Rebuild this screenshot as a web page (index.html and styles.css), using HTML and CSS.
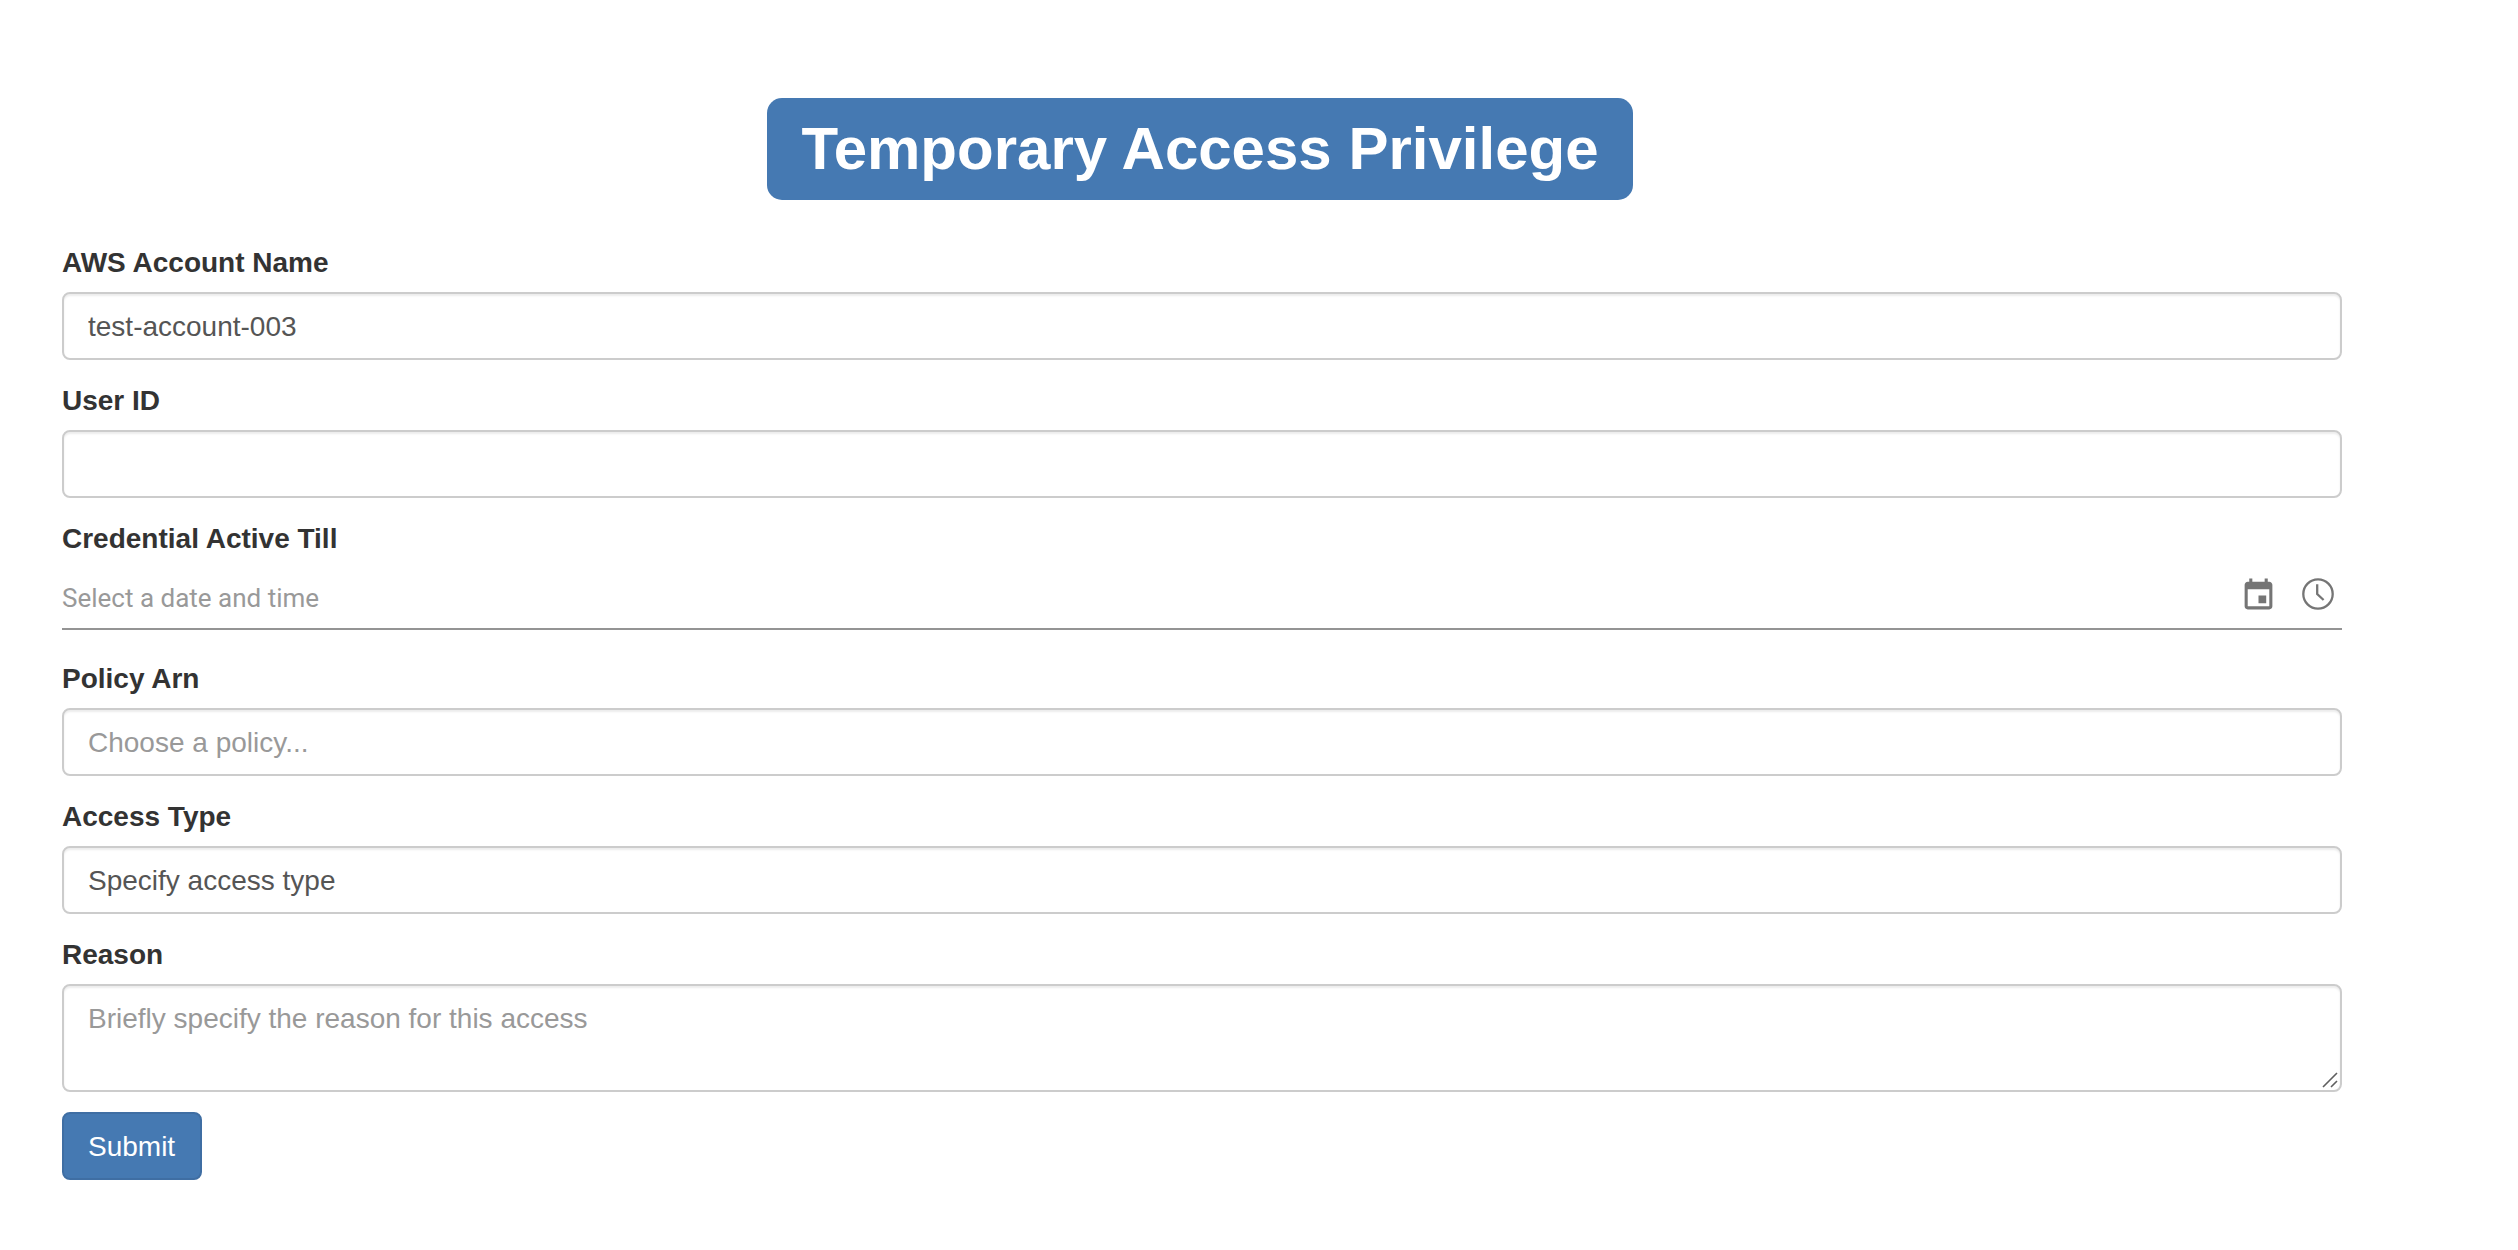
FILE: index.html
```html
<!DOCTYPE html>
<html lang="en">
<head>
<meta charset="utf-8">
<meta name="viewport" content="width=device-width, initial-scale=1">
<title>Temporary Access Privilege</title>
<link rel="stylesheet" href="styles.css">
</head>
<body>
<main class="page">
  <h1 class="page-title"><span class="title-label">Temporary Access Privilege</span></h1>
  <form class="request-form">
    <div class="form-group">
      <label for="account">AWS Account Name</label>
      <input class="form-control" id="account" type="text" value="test-account-003">
    </div>
    <div class="form-group">
      <label for="user">User ID</label>
      <input class="form-control" id="user" type="text">
    </div>
    <div class="form-group form-group-picker">
      <label for="till">Credential Active Till</label>
      <div class="picker">
        <input class="picker-input" id="till" type="text" placeholder="Select a date and time">
        <button class="icon-button" type="button" aria-label="Pick a date">
          <svg class="icon-date" viewBox="0 0 24 24" aria-hidden="true"><path fill="currentColor" d="M17 12h-5v5h5v-5zM16 1v2H8V1H6v2H5c-1.11 0-1.99.9-1.99 2L3 19c0 1.1.89 2 2 2h14c1.1 0 2-.9 2-2V5c0-1.1-.9-2-2-2h-1V1h-2zm3 18H5V8h14v11z"/></svg>
        </button>
        <button class="icon-button" type="button" aria-label="Pick a time">
          <svg class="icon-time" viewBox="0 0 32 32" fill="none" stroke="currentColor" stroke-width="2.3" aria-hidden="true"><circle cx="16" cy="16" r="14.7"/><path d="M15.2 6.2V16l6.4 6"/></svg>
        </button>
      </div>
    </div>
    <div class="form-group">
      <label for="policy">Policy Arn</label>
      <input class="form-control" id="policy" type="text" placeholder="Choose a policy...">
    </div>
    <div class="form-group">
      <label for="access">Access Type</label>
      <select class="form-control" id="access">
        <option>Specify access type</option>
      </select>
    </div>
    <div class="form-group">
      <label for="reason">Reason</label>
      <div class="textarea-wrap">
        <textarea class="form-control form-textarea" id="reason" placeholder="Briefly specify the reason for this access"></textarea>
        <svg class="resize-grip" viewBox="0 0 16 16" fill="none" stroke="#5f5f5f" stroke-width="1.6" aria-hidden="true"><path d="M1 15L15 1M9 15l6-6"/></svg>
      </div>
    </div>
    <button class="submit" type="submit">Submit</button>
  </form>
</main>
</body>
</html>
```
FILE: styles.css
```css
* {
  box-sizing: border-box;
}

body {
  margin: 0;
  background: #fff;
  color: #333;
  font: 28px/40px "Liberation Sans", Arial, sans-serif;
}

.page {
  padding: 98px 176px 70px 62px;
}

.page-title {
  display: flex;
  justify-content: center;
  margin: 0 4px 42px 0;
  font-size: 60px;
  line-height: 102px;
}

.title-label {
  padding: 0 34px;
  border-radius: 15px;
  background: #4579b2;
  color: #fff;
}

.request-form {
  display: flex;
  flex-direction: column;
  gap: 20px;
}

.form-group {
  display: flex;
  flex-direction: column;
  gap: 8px;
}

label {
  font-weight: 700;
  line-height: 42px;
}

.form-control {
  display: block;
  width: 100%;
  height: 68px;
  margin: 0;
  padding: 13px 24px 11px;
  border: 2px solid #ccc;
  border-radius: 8px;
  background: #fff;
  box-shadow: inset 0 2px 2px rgba(0, 0, 0, 0.075);
  color: #555;
  font: inherit;
  appearance: none;
}

.form-control::placeholder,
.picker-input::placeholder {
  color: #999;
  opacity: 1;
}

.form-group-picker {
  padding-bottom: 8px;
}

.picker {
  display: flex;
  gap: 25px;
  height: 62px;
  padding-right: 8px;
  border-bottom: 2px solid #949494;
}

.picker-input {
  flex: 1;
  min-width: 0;
  padding: 0;
  border: 0;
  background: transparent;
  color: #333;
  font: 26px/30px Roboto, sans-serif;
}

.icon-button {
  display: flex;
  align-items: flex-start;
  padding: 9px 0 0;
  border: 0;
  background: transparent;
  color: #757575;
}

.icon-date {
  width: 37px;
  height: 37px;
}

.icon-time {
  width: 32px;
  height: 34px;
}

.textarea-wrap {
  position: relative;
}

.form-textarea {
  height: 108px;
  resize: none;
}

.resize-grip {
  position: absolute;
  right: 4px;
  bottom: 4px;
  width: 16px;
  height: 16px;
}

.submit {
  align-self: flex-start;
  padding: 13px 25px 11px 24px;
  border: 2px solid #3f6ea3;
  border-radius: 8px;
  background: #4579b2;
  color: #fff;
  font: inherit;
}
```
